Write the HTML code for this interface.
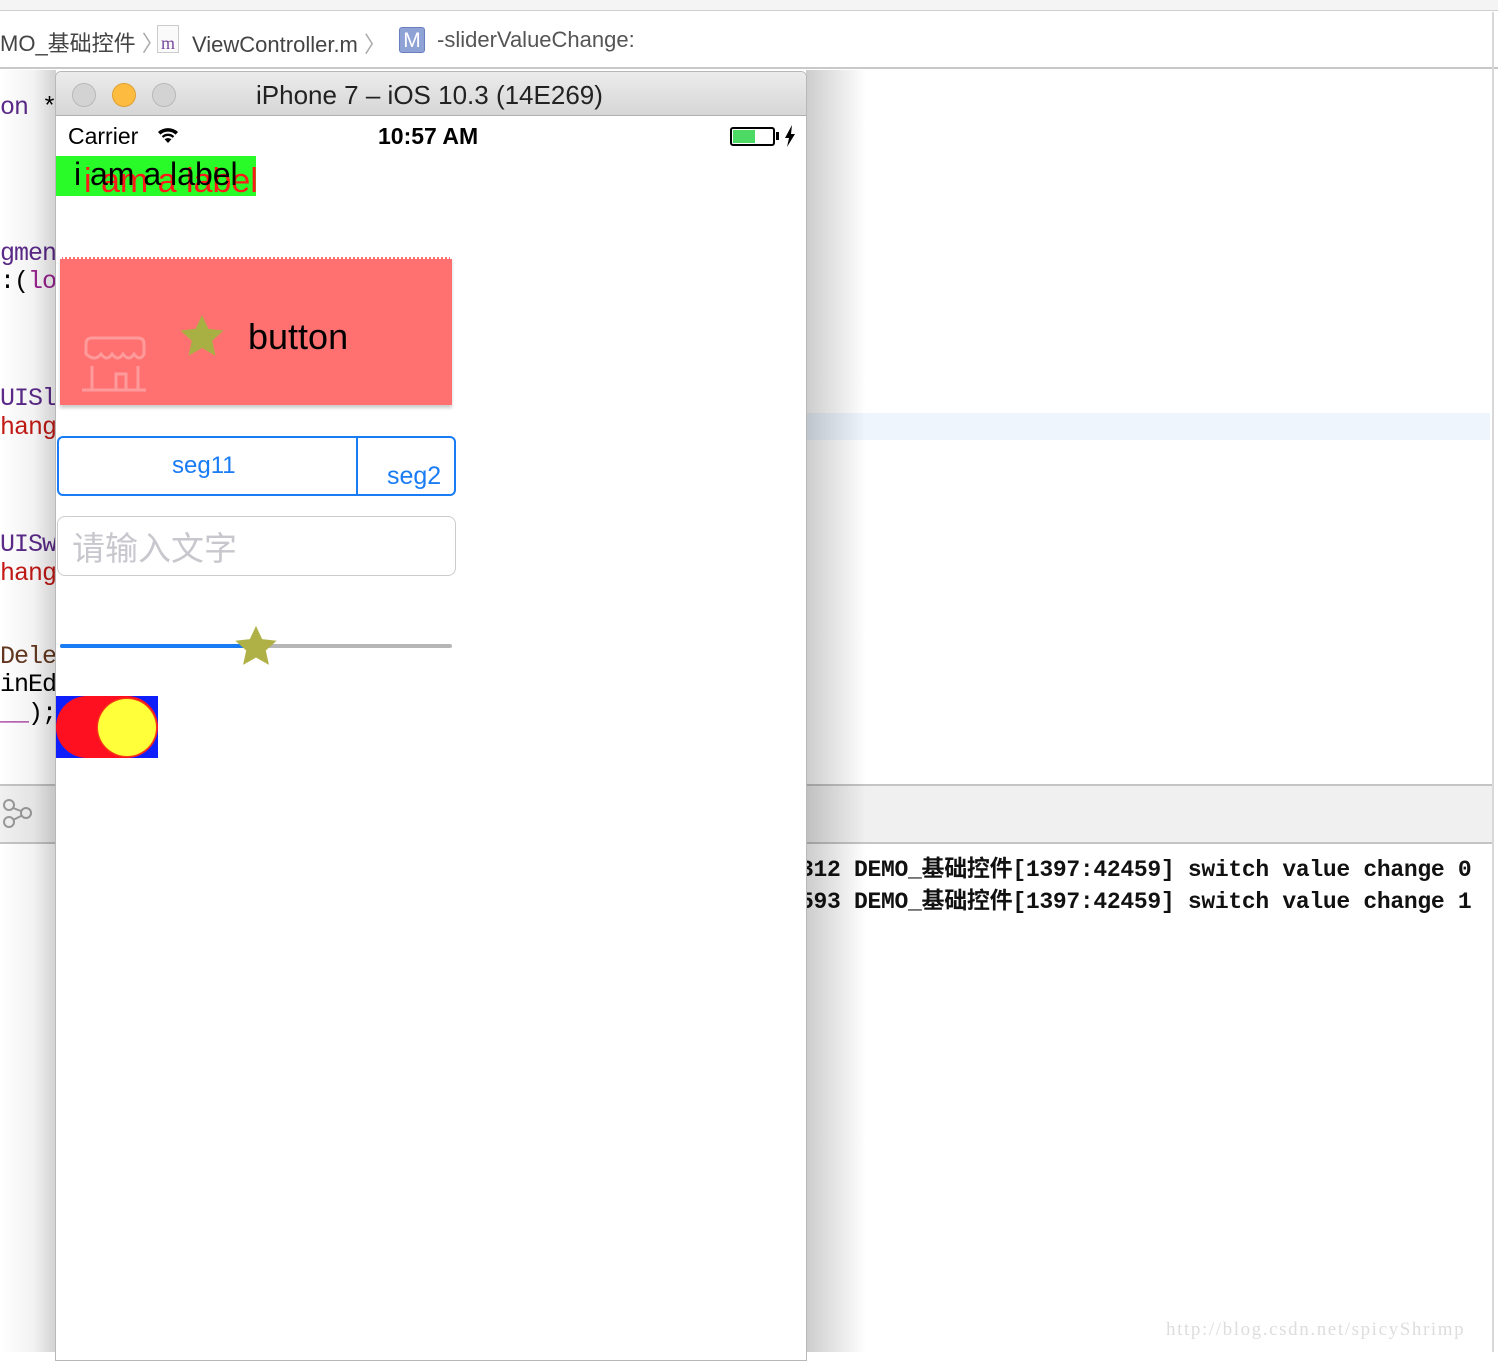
<!DOCTYPE html>
<html><head><meta charset="utf-8"><style>
*{margin:0;padding:0;box-sizing:border-box}
body{width:1498px;height:1352px;overflow:hidden;background:#fff;position:relative;font-family:"Liberation Sans","Noto Sans CJK SC",sans-serif}
.a{position:absolute}
.code{font-family:"Liberation Mono","Noto Sans CJK SC",monospace;font-size:25px;white-space:pre;letter-spacing:-1px}
</style></head><body>
<div class="a" style="left:0;top:0;width:1498px;height:11px;background:#f4f4f4;border-bottom:1px solid #d0d0d0"></div>
<div class="a" style="left:0;top:12px;width:1498px;height:57px;background:#fff;border-bottom:2px solid #c8c8c8"></div>
<div class="a" style="left:0;top:26px;font-size:22px;color:#444;white-space:nowrap">MO_基础控件 <span style="color:#aaa">〉</span></div>
<div class="a" style="left:157px;top:25px;width:22px;height:28px;border:1px solid #ccc;background:#fafafa;color:#7a4aa0;font-family:'Liberation Serif',serif;font-size:18px;text-align:center;line-height:34px">m</div>
<div class="a" style="left:192px;top:27px;font-size:22px;color:#444;white-space:nowrap">ViewController.m <span style="color:#aaa">〉</span></div>
<div class="a" style="left:399px;top:27px;width:26px;height:26px;background:#8fa2d6;border:1px solid #6a80c0;border-radius:3px;color:#fff;font-size:21px;text-align:center;line-height:25px">M</div>
<div class="a" style="left:437px;top:27px;font-size:22px;color:#555">-sliderValueChange:</div>
<div class="a" style="left:1492px;top:12px;width:2px;height:1340px;background:#d8d8d8"></div>
<div class="a" style="left:806px;top:413px;width:684px;height:27px;background:#eef5fd"></div>
<div class="a code" style="left:0;top:93px;color:#5b2a8a">on <span style="color:#000">*</span></div>
<div class="a code" style="left:0;top:239px;color:#5b2a8a">gment</div>
<div class="a code" style="left:0;top:267px;color:#000">:(<span style="color:#9b2393">lon</span></div>
<div class="a code" style="left:0;top:384px;color:#5b2a8a">UISli</div>
<div class="a code" style="left:0;top:413px;color:#c41a16">hange</div>
<div class="a code" style="left:0;top:530px;color:#5b2a8a">UISwi</div>
<div class="a code" style="left:0;top:559px;color:#c41a16">hange</div>
<div class="a code" style="left:0;top:642px;color:#643820">Deleg</div>
<div class="a code" style="left:0;top:670px;color:#000">inEdi</div>
<div class="a code" style="left:0;top:699px;color:#000"><span style="color:#9b2393">__</span>);</div>
<div class="a" style="left:0;top:784px;width:1492px;height:60px;background:#f0f0f0;border-top:2px solid #c4c4c4;border-bottom:2px solid #c4c4c4"></div>
<svg class="a" style="left:2px;top:797px" width="34" height="34" viewBox="0 0 34 34" fill="none" stroke="#999" stroke-width="2"><circle cx="7" cy="8" r="5"/><circle cx="24" cy="16" r="5"/><circle cx="7" cy="25" r="5"/><path d="M11 11l8 3M11 23l8-4"/></svg>
<div class="a code" style="left:800px;top:854px;font-weight:bold;font-size:23px;line-height:32px;color:#111;letter-spacing:-0.3px">312 DEMO_基础控件[1397:42459] switch value change 0
593 DEMO_基础控件[1397:42459] switch value change 1</div>
<div class="a" style="left:1166px;top:1319px;font-family:'Liberation Serif',serif;font-size:19px;letter-spacing:1.6px;color:#ddd;white-space:nowrap">http://blog.csdn.net/spicyShrimp</div>
<div class="a" style="left:0;top:70px;width:56px;height:1282px;background:linear-gradient(90deg,rgba(0,0,0,0) 0%,rgba(0,0,0,.05) 60%,rgba(0,0,0,.18) 100%)"></div>
<div class="a" style="left:806px;top:70px;width:60px;height:1282px;background:linear-gradient(90deg,rgba(0,0,0,.2),rgba(0,0,0,0))"></div>
<div class="a" style="left:55px;top:71px;width:752px;height:1290px;border:1px solid #b8b8b8;border-radius:6px 6px 0 0;background:#fff;overflow:hidden">
 <div style="height:44px;background:linear-gradient(#ececec,#d6d6d6);border-bottom:1px solid #b0b0b0;position:relative">
  <div class="a" style="left:16px;top:11px;width:24px;height:24px;border-radius:50%;background:#d3d3d3;border:1px solid #b8b8b8"></div>
  <div class="a" style="left:56px;top:11px;width:24px;height:24px;border-radius:50%;background:#fdbc40;border:1px solid #e0a030"></div>
  <div class="a" style="left:96px;top:11px;width:24px;height:24px;border-radius:50%;background:#d3d3d3;border:1px solid #b8b8b8"></div>
  <div class="a" style="left:200px;top:8px;font-size:26px;color:#222;white-space:nowrap">iPhone 7 – iOS 10.3 (14E269)</div>
 </div>
</div>
<div class="a" style="left:68px;top:123px;font-size:23px;color:#000">Carrier</div>
<svg class="a" style="left:156px;top:126px" width="24" height="18" viewBox="0 0 24 18"><path d="M12 17L2 6a15 15 0 0 1 20 0z" fill="#000"/><path d="M5 9.5a10 10 0 0 1 14 0M8 12.5a6 6 0 0 1 8 0" stroke="#fff" stroke-width="2" fill="none"/></svg>
<div class="a" style="left:378px;top:123px;font-size:23px;font-weight:bold;color:#000">10:57 AM</div>
<div class="a" style="left:730px;top:127px;width:45px;height:19px;border:2px solid #000;border-radius:3px;padding:1px"><div style="width:22px;height:13px;background:#4cd964"></div></div>
<div class="a" style="left:776px;top:132px;width:3px;height:8px;background:#000"></div>
<svg class="a" style="left:784px;top:125px" width="12" height="22" viewBox="0 0 12 22"><path d="M8 0L1 13h4l-2 9 8-13H7z" fill="#000"/></svg>
<div class="a" style="left:56px;top:156px;width:200px;height:40px;background:#28fb28;overflow:hidden">
 <div class="a" style="left:28px;top:6px;font-size:34px;color:#ff1a1a;white-space:nowrap">i am a label</div>
 <div class="a" style="left:18px;top:0;font-size:32px;color:#000;white-space:nowrap">i am a label</div>
</div>
<div class="a" style="left:60px;top:257px;width:392px;height:148px;background:#ff7171;box-shadow:0 3px 3px rgba(0,0,0,.2);border-top:2px dotted #fff"></div>
<svg class="a" style="left:80px;top:336px" width="70" height="56" viewBox="0 0 70 56" fill="none" stroke="#ff9a9a" stroke-width="3"><path d="M6 18V8q0-6 6-6h46q6 0 6 6v10q-4 8-10 0q-5 8-11 0q-5 8-11 0q-5 8-11 0q-6 8-15 0z"/><path d="M12 30v24M58 30v24M2 54h64M36 54V38h10v16"/></svg>
<svg class="a" style="left:180px;top:315px" width="44" height="42" viewBox="0 0 24 23"><path d="M12 0l3.5 7.6 8.3.9-6.2 5.6 1.8 8.2L12 18.1l-7.4 4.2 1.8-8.2L.2 8.5l8.3-.9z" fill="#a9b043"/></svg>
<div class="a" style="left:248px;top:316px;font-size:36px;color:#000">button</div>
<div class="a" style="left:57px;top:436px;width:399px;height:60px;border:2px solid #1a7cf5;border-radius:6px"></div>
<div class="a" style="left:356px;top:437px;width:2px;height:58px;background:#1a7cf5"></div>
<div class="a" style="left:172px;top:452px;font-size:24px;color:#1a7cf5">seg11</div>
<div class="a" style="left:387px;top:462px;font-size:25px;color:#1a7cf5">seg2</div>
<div class="a" style="left:57px;top:516px;width:399px;height:60px;border:1px solid #ccc;border-radius:8px"></div>
<div class="a" style="left:72px;top:522px;font-size:33px;color:#c7c7cd">请输入文字</div>
<div class="a" style="left:60px;top:644px;width:392px;height:4px;background:#b6b6b6;border-radius:2px"></div>
<div class="a" style="left:60px;top:644px;width:196px;height:4px;background:#1a7cf5;border-radius:2px"></div>
<svg class="a" style="left:235px;top:625px" width="42" height="42" viewBox="0 0 24 23"><path d="M12 0l3.5 7.6 8.3.9-6.2 5.6 1.8 8.2L12 18.1l-7.4 4.2 1.8-8.2L.2 8.5l8.3-.9z" fill="#afb045"/></svg>
<div class="a" style="left:56px;top:696px;width:102px;height:62px;background:#0f1ffc;overflow:hidden">
 <div class="a" style="left:0;top:0;width:102px;height:62px;border-radius:31px;background:#ff1020"></div>
 <div class="a" style="left:42px;top:3px;width:58px;height:57px;border-radius:50%;background:#ffff3a;box-shadow:0 0 2px #e0a000"></div>
</div>
</body></html>
